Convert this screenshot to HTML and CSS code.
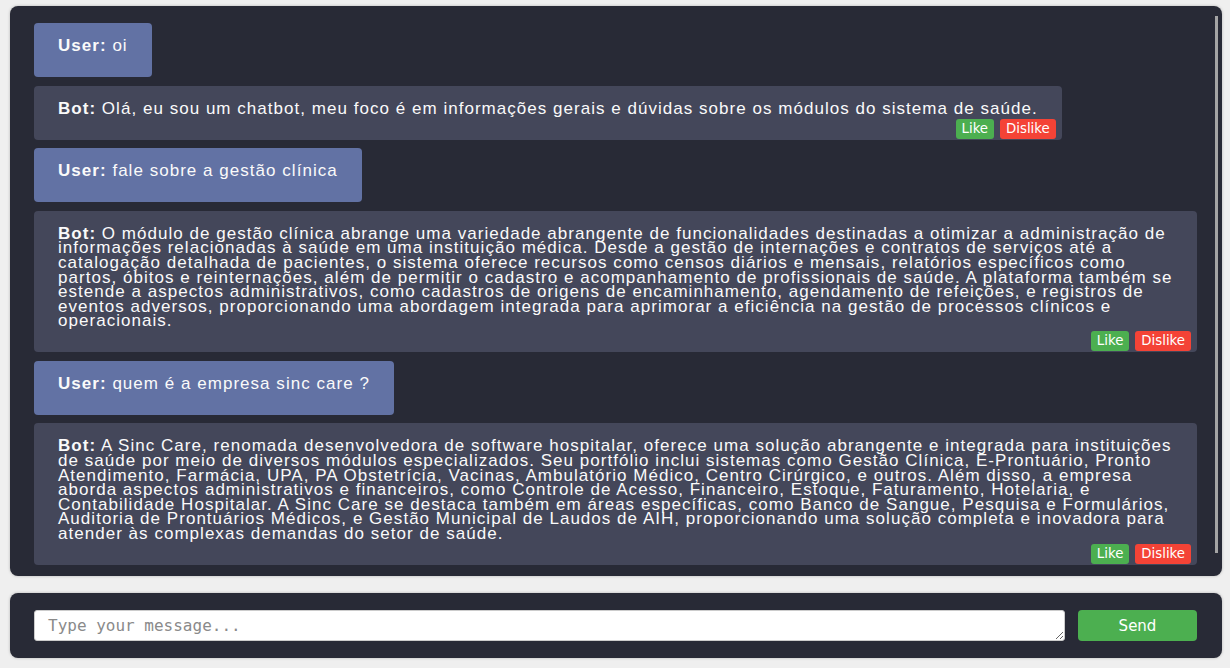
FILE: index.html
```html
<!DOCTYPE html>
<html lang="pt">
<head>
<meta charset="utf-8">
<title>Chatbot</title>
<link rel="stylesheet" href="styles.css">
</head>
<body>
<main class="page">
  <section class="chat">
    <div class="messages">
      <div class="msg user"><strong>User:</strong> oi</div>
      <div class="msg bot"><strong>Bot:</strong> Olá, eu sou um chatbot, meu foco é em informações gerais e dúvidas sobre os módulos do sistema de saúde.
        <div class="feedback"><button class="like">Like</button><button class="dislike">Dislike</button></div>
      </div>
      <div class="msg user"><strong>User:</strong> fale sobre a gestão clínica</div>
      <div class="msg bot"><strong>Bot:</strong> O módulo de gestão clínica abrange uma variedade abrangente de funcionalidades destinadas a otimizar a administração de informações relacionadas à saúde em uma instituição médica. Desde a gestão de internações e contratos de serviços até a catalogação detalhada de pacientes, o sistema oferece recursos como censos diários e mensais, relatórios específicos como partos, óbitos e reinternações, além de permitir o cadastro e acompanhamento de profissionais de saúde. A plataforma também se estende a aspectos administrativos, como cadastros de origens de encaminhamento, agendamento de refeições, e registros de eventos adversos, proporcionando uma abordagem integrada para aprimorar a eficiência na gestão de processos clínicos e operacionais.
        <div class="feedback"><button class="like">Like</button><button class="dislike">Dislike</button></div>
      </div>
      <div class="msg user"><strong>User:</strong> quem é a empresa sinc care ?</div>
      <div class="msg bot"><strong>Bot:</strong> A Sinc Care, renomada desenvolvedora de software hospitalar, oferece uma solução abrangente e integrada para instituições de saúde por meio de diversos módulos especializados. Seu portfólio inclui sistemas como Gestão Clínica, E-Prontuário, Pronto Atendimento, Farmácia, UPA, PA Obstetrícia, Vacinas, Ambulatório Médico, Centro Cirúrgico, e outros. Além disso, a empresa aborda aspectos administrativos e financeiros, como Controle de Acesso, Financeiro, Estoque, Faturamento, Hotelaria, e Contabilidade Hospitalar. A Sinc Care se destaca também em áreas específicas, como Banco de Sangue, Pesquisa e Formulários, Auditoria de Prontuários Médicos, e Gestão Municipal de Laudos de AIH, proporcionando uma solução completa e inovadora para atender às complexas demandas do setor de saúde.
        <div class="feedback"><button class="like">Like</button><button class="dislike">Dislike</button></div>
      </div>
    </div>
    <div class="scrollbar" aria-hidden="true"><div class="thumb"></div></div>
  </section>
  <form class="composer">
    <textarea class="input" placeholder="Type your message..."></textarea>
    <button type="button" class="send">Send</button>
  </form>
</main>
</body>
</html>
```
FILE: styles.css
```css
html, body {
  margin: 0;
  height: 100%;
  background: #efefef;
}
.page {
  box-sizing: border-box;
  height: 100vh;
  padding: 6px 8px 10px 10px;
  display: flex;
  flex-direction: column;
  gap: 17px;
}
.chat {
  height: 570px;
  flex: none;
  display: flex;
  background: #282a36;
  border-radius: 8px;
  box-shadow: 0 0 3px rgba(0,0,0,0.25);
  overflow: hidden;
}
.messages {
  flex: 1;
  min-width: 0;
  overflow: hidden;
  padding: 17px 15px 0 24px;
  display: flex;
  flex-direction: column;
  align-items: flex-start;
  gap: 8.6px;
}
.scrollbar {
  width: 10px;
  flex: none;
  box-sizing: border-box;
  padding: 10px 4px 23px 3px;
  display: flex;
}
.thumb {
  flex: 1;
  background: #a4a4a4;
}
.msg {
  position: relative;
  flex: none;
  box-sizing: border-box;
  padding: 16px 24px 23.5px;
  border-radius: 4px;
  color: #fafafa;
  font-family: "Liberation Sans", Arial, sans-serif;
  font-size: 17px;
  letter-spacing: 1.03px;
  line-height: 14.55px;
  max-width: 100%;
}
.msg strong {
  font-weight: bold;
  display: inline-block;
  line-height: 14.55px;
}
.user { background: #6272a4; }
.bot { background: #44475a; }
.feedback {
  position: absolute;
  right: 6px;
  bottom: 1px;
  display: flex;
  gap: 6px;
}
.feedback button {
  border: none;
  border-radius: 3px;
  color: #fff;
  font-family: "DejaVu Sans", sans-serif;
  font-size: 13.3px;
  letter-spacing: 0;
  line-height: 16px;
  padding: 2px 6px;
}
.like { background: #4caf50; }
.dislike { background: #f44336; }
.composer {
  height: 65px;
  box-sizing: border-box;
  margin: 0;
  padding: 17px 25px 17px 24px;
  background: #282a36;
  border-radius: 8px;
  box-shadow: 0 0 3px rgba(0,0,0,0.25);
  display: flex;
  gap: 13px;
}
.input {
  flex: 1;
  box-sizing: border-box;
  height: 31px;
  border: 1px solid #ccc;
  border-radius: 3px;
  padding: 5px 13px;
  font-family: "DejaVu Sans Mono", monospace;
  font-size: 16px;
  line-height: 19px;
  background: #fff;
}
.input::placeholder { color: #8a8a8a; }
.send {
  width: 119px;
  height: 31px;
  border: none;
  border-radius: 4px;
  background: #4caf50;
  color: #fff;
  font-family: "DejaVu Sans", sans-serif;
  font-size: 15px;
}
```
